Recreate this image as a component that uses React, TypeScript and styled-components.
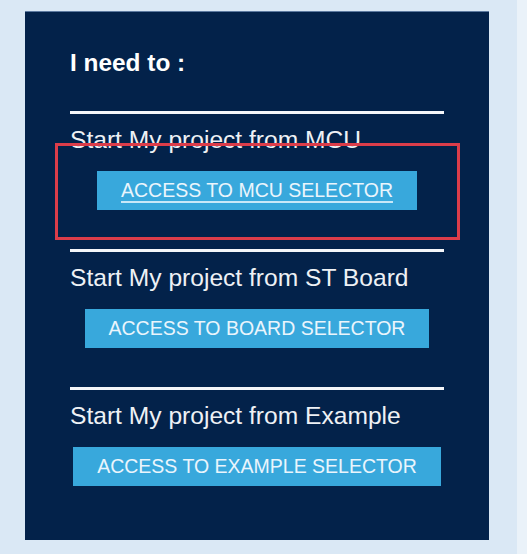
import React from "react";
import styled, { createGlobalStyle } from "styled-components";

const GlobalStyle = createGlobalStyle`
  html, body {
    margin: 0;
    padding: 0;
    background: #eaf2f9;
  }
  body {
    font-family: "Liberation Sans", Arial, sans-serif;
  }
`;

const Page = styled.div`
  width: 517px;
  min-height: 554px;
  box-sizing: border-box;
  padding: 11px 0 0 25px;
  background: #dae8f5;
`;

const Panel = styled.div`
  width: 464px;
  box-sizing: border-box;
  padding: 38px 45px 54px;
  background: #03224a;
  box-shadow: inset 0 1px 0 #5d7aa0;
  display: flex;
  flex-direction: column;
`;

const Heading = styled.h2`
  margin: 0 0 34px;
  font-size: 24.4px;
  line-height: 28px;
  font-weight: 700;
  color: #ffffff;
`;

const Sections = styled.div`
  display: flex;
  flex-direction: column;
  gap: 39px;
`;

const Section = styled.div`
  position: relative;
  display: flex;
  flex-direction: column;
  align-items: center;
`;

const Divider = styled.div`
  align-self: stretch;
  height: 3px;
  background: #f4f6f9;
  margin-bottom: 12px;
`;

const Label = styled.div`
  align-self: stretch;
  font-size: 24.6px;
  line-height: 28px;
  color: #eef1f5;
  margin-bottom: 17px;
  white-space: nowrap;
`;

const Button = styled.a<{ $active?: boolean }>`
  display: flex;
  align-items: center;
  justify-content: center;
  height: 39px;
  box-sizing: border-box;
  padding: 0 24px;
  background: #38a8dc;
  color: #eaf5fc;
  font-size: 19.5px;
  white-space: nowrap;
  text-decoration: ${(p) => (p.$active ? "underline" : "none")};
  text-decoration-thickness: 2px;
  text-underline-offset: 4px;
  text-decoration-color: #c9e8f8;
  cursor: pointer;
`;

const Highlight = styled.div`
  position: absolute;
  left: -15px;
  top: 32px;
  width: 405px;
  height: 97px;
  box-sizing: border-box;
  border: 3px solid #dc3d4a;
  pointer-events: none;
`;

const items = [
  { label: "Start My project from MCU", button: "ACCESS TO MCU SELECTOR", active: true },
  { label: "Start My project from ST Board", button: "ACCESS TO BOARD SELECTOR", active: false },
  { label: "Start My project from Example", button: "ACCESS TO EXAMPLE SELECTOR", active: false },
];

export default function App() {
  return (
    <>
      <GlobalStyle />
      <Page>
        <Panel>
          <Heading>I need to :</Heading>
          <Sections>
            {items.map((it) => (
              <Section key={it.label}>
                <Divider />
                <Label>{it.label}</Label>
                <Button $active={it.active}>{it.button}</Button>
                {it.active && <Highlight />}
              </Section>
            ))}
          </Sections>
        </Panel>
      </Page>
    </>
  );
}
